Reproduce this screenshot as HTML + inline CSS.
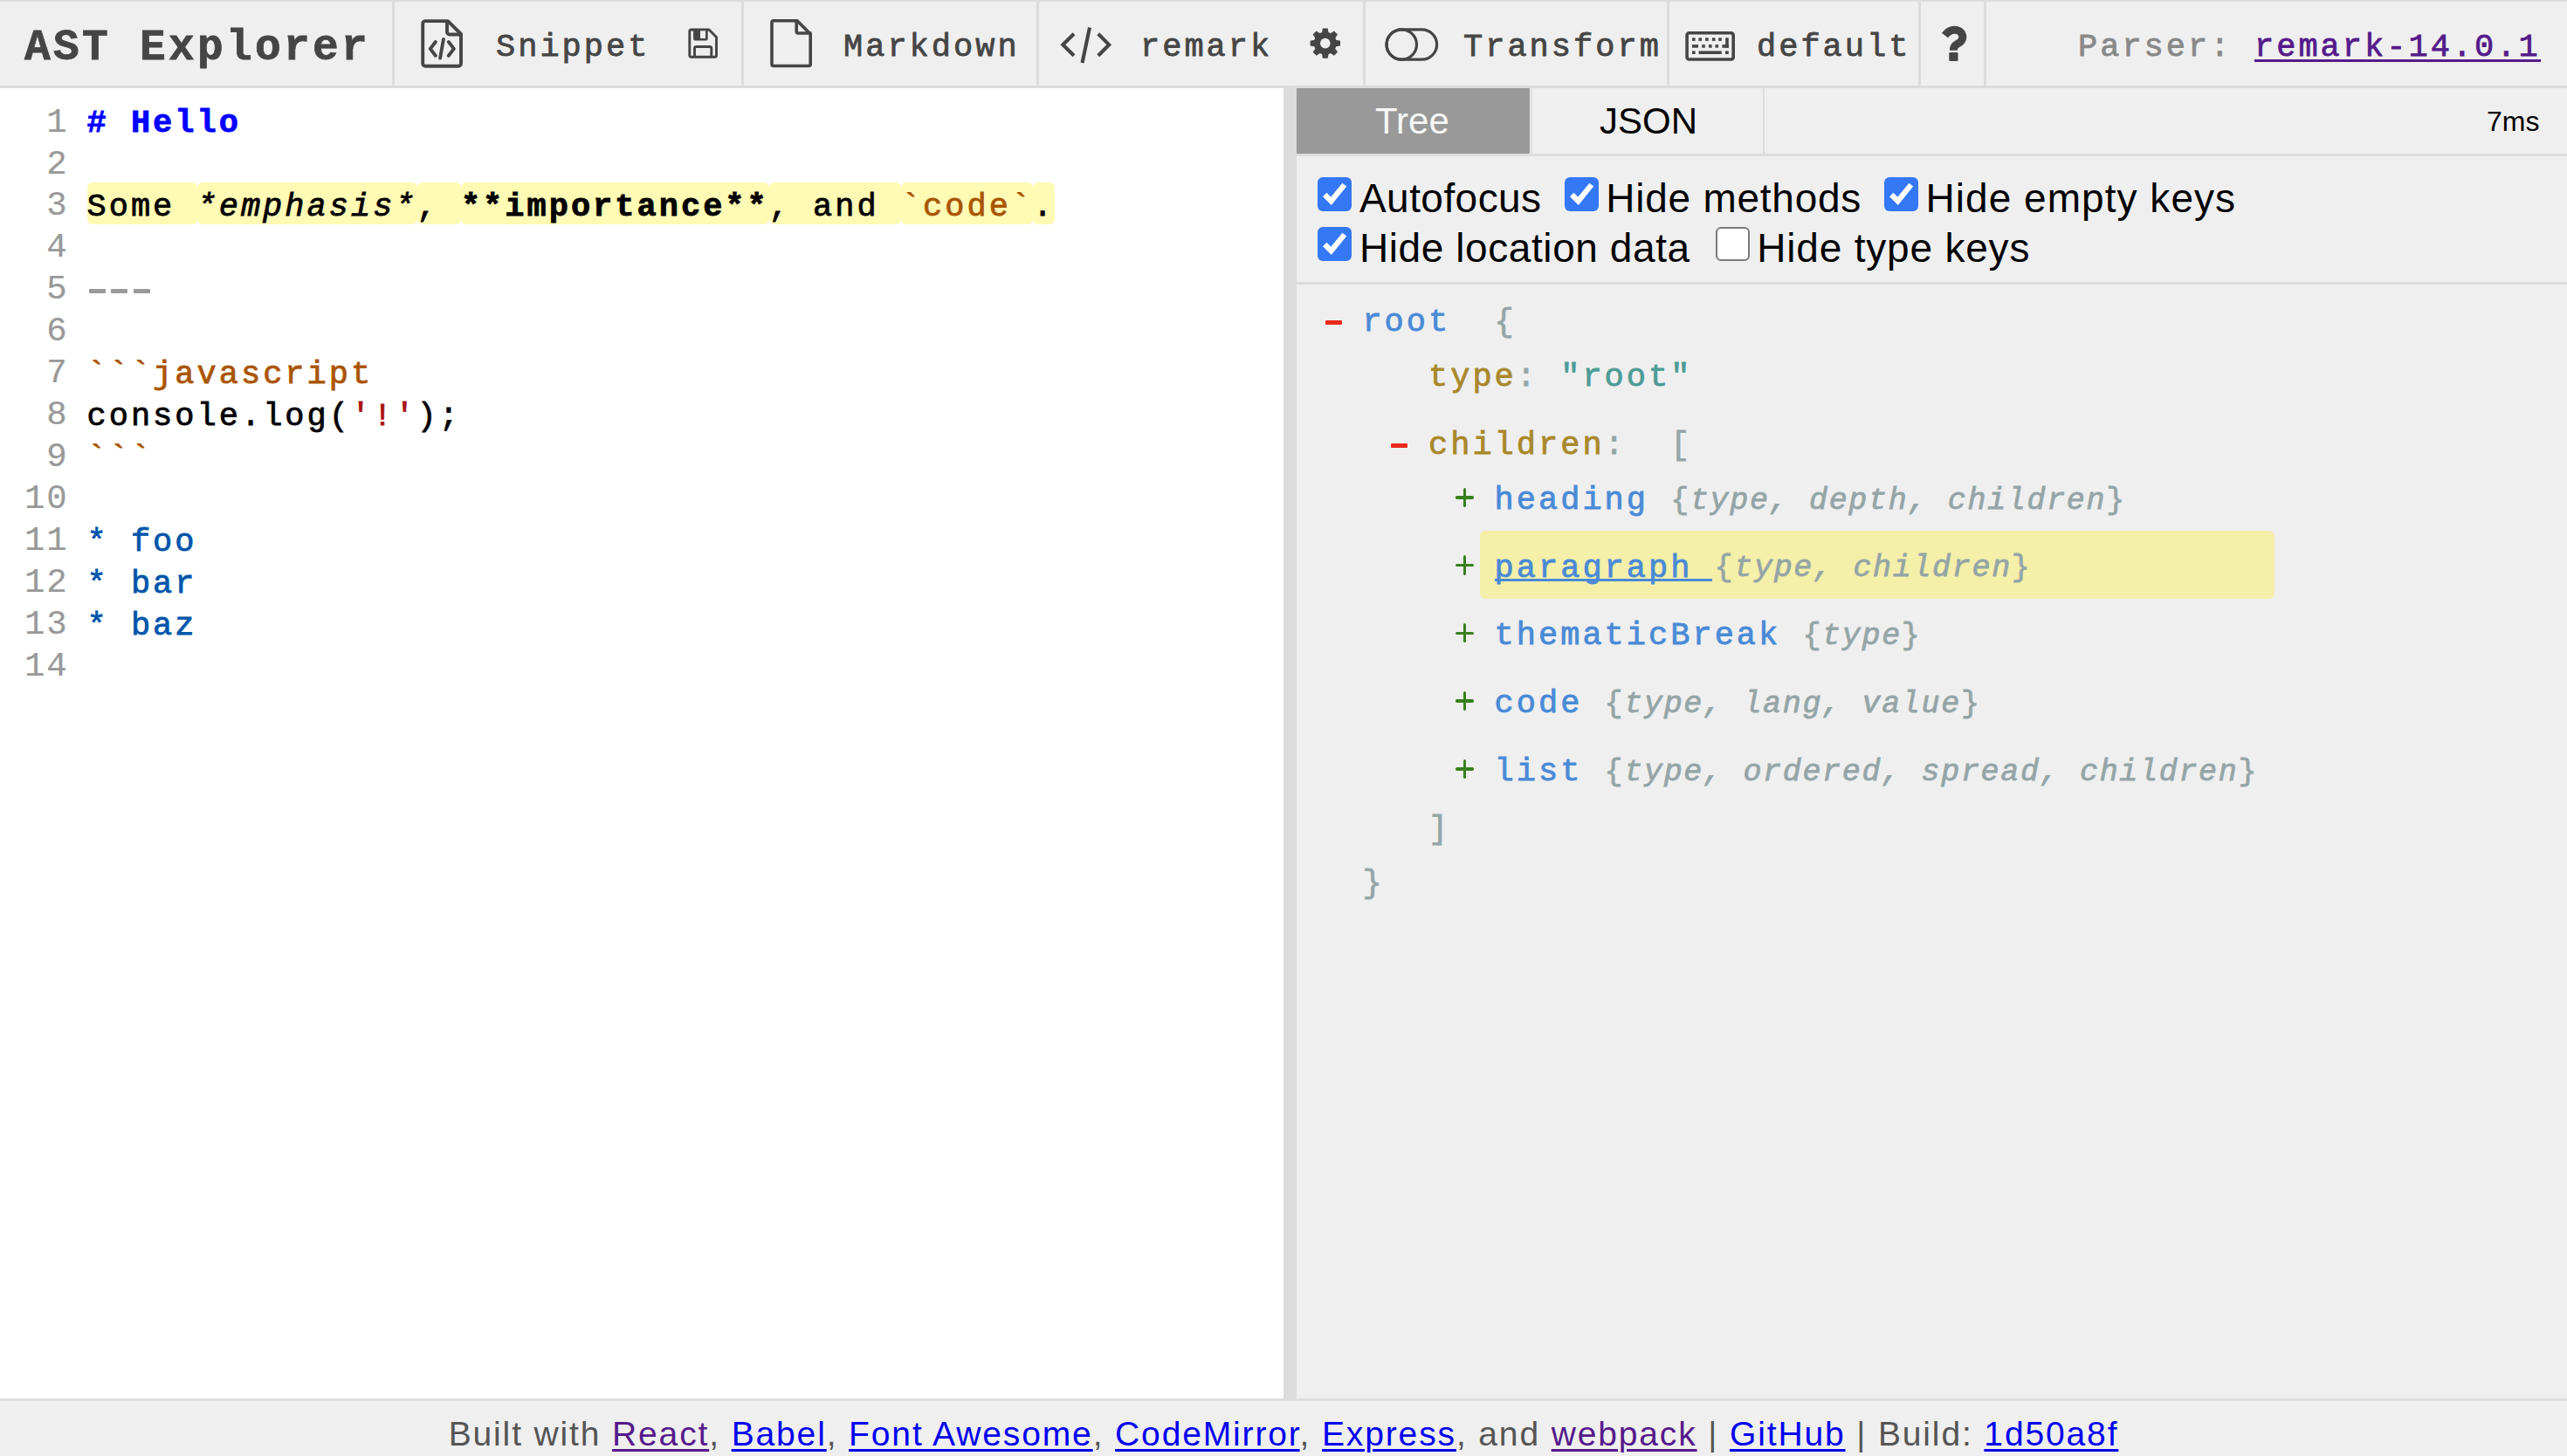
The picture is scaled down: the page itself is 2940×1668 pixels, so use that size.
<!DOCTYPE html>
<html><head><meta charset="utf-8"><title>AST Explorer</title>
<style>
html,body{margin:0;padding:0;}
body{width:2940px;height:1668px;overflow:hidden;position:relative;background:#fff;}
.a{position:absolute;white-space:pre;line-height:normal;}
.foot a{color:#551a8b;text-decoration:underline;text-decoration-thickness:3px;text-underline-offset:4px;}
.foot b{font-weight:normal;color:#0000ee;text-decoration:underline;text-decoration-thickness:3px;text-underline-offset:4px;}
</style></head><body>
<div class="a" style="left:0px;top:0px;width:2940px;height:100px;background:#efefef;"></div>
<div class="a" style="left:0px;top:0px;width:2940px;height:2px;background:#dddddd;"></div>
<div class="a" style="left:0px;top:98px;width:2940px;height:3px;background:#dcdcdc;"></div>
<div class="a" style="left:449px;top:2px;width:3px;height:96px;background:#dcdcdc;"></div>
<div class="a" style="left:849px;top:2px;width:3px;height:96px;background:#dcdcdc;"></div>
<div class="a" style="left:1187px;top:2px;width:3px;height:96px;background:#dcdcdc;"></div>
<div class="a" style="left:1561px;top:2px;width:3px;height:96px;background:#dcdcdc;"></div>
<div class="a" style="left:1909px;top:2px;width:3px;height:96px;background:#dcdcdc;"></div>
<div class="a" style="left:2197px;top:2px;width:3px;height:96px;background:#dcdcdc;"></div>
<div class="a" style="left:2272px;top:2px;width:3px;height:96px;background:#dcdcdc;"></div>
<div class="a" style="left:0px;top:101px;width:1470px;height:1501px;background:#ffffff;"></div>
<div class="a" style="left:1470px;top:101px;width:15px;height:1501px;background:#dcdcdc;"></div>
<div class="a" style="left:1485px;top:101px;width:1455px;height:1501px;background:#efefef;"></div>
<div class="a" style="left:1485px;top:101px;width:267px;height:75px;background:#999999;"></div>
<div class="a" style="left:1753px;top:101px;width:2px;height:75px;background:#dddddd;"></div>
<div class="a" style="left:2019px;top:101px;width:2px;height:75px;background:#dddddd;"></div>
<div class="a" style="left:1485px;top:176px;width:1455px;height:3px;background:#dddddd;"></div>
<div class="a" style="left:1485px;top:323px;width:1455px;height:3px;background:#dddddd;"></div>
<div class="a" style="left:0px;top:1602px;width:2940px;height:3px;background:#dddddd;"></div>
<div class="a" style="left:0px;top:1605px;width:2940px;height:63px;background:#efefef;"></div>
<div class="a" style="left:28.0px;top:26.8px;font-family:'Liberation Mono',monospace;font-size:49.5px;letter-spacing:3.30px;color:#454545;font-weight:bold;font-style:normal;-webkit-text-stroke:0.8px #454545;">AST Explorer</div>
<div class="a" style="left:568.0px;top:32.8px;font-family:'Liberation Mono',monospace;font-size:37px;letter-spacing:3.00px;color:#454545;font-weight:normal;font-style:normal;-webkit-text-stroke:0.8px #454545;">Snippet</div>
<div class="a" style="left:966.0px;top:32.8px;font-family:'Liberation Mono',monospace;font-size:37px;letter-spacing:3.00px;color:#454545;font-weight:normal;font-style:normal;-webkit-text-stroke:0.8px #454545;">Markdown</div>
<div class="a" style="left:1306.0px;top:32.8px;font-family:'Liberation Mono',monospace;font-size:37px;letter-spacing:3.00px;color:#454545;font-weight:normal;font-style:normal;-webkit-text-stroke:0.8px #454545;">remark</div>
<div class="a" style="left:1676.0px;top:32.8px;font-family:'Liberation Mono',monospace;font-size:37px;letter-spacing:3.00px;color:#454545;font-weight:normal;font-style:normal;-webkit-text-stroke:0.8px #454545;">Transform</div>
<div class="a" style="left:2012.0px;top:32.8px;font-family:'Liberation Mono',monospace;font-size:37px;letter-spacing:3.00px;color:#454545;font-weight:normal;font-style:normal;-webkit-text-stroke:0.8px #454545;">default</div>
<div class="a" style="left:2380.0px;top:33.2px;font-family:'Liberation Mono',monospace;font-size:37px;letter-spacing:3.00px;color:#888888;font-weight:normal;font-style:normal;-webkit-text-stroke:0.8px #888888;">Parser:</div>
<div class="a" style="left:2582.0px;top:33.2px;font-family:'Liberation Mono',monospace;font-size:37px;letter-spacing:3.00px;color:#551a8b;font-weight:normal;font-style:normal;-webkit-text-stroke:0.8px #551a8b;">remark-14.0.1</div>
<div class="a" style="left:2582px;top:68px;width:328px;height:3px;background:#551a8b;"></div>
<div class="a" style="left:53.3px;top:118.5px;font-family:'Liberation Mono',monospace;font-size:39px;letter-spacing:1.80px;color:#999999;font-weight:normal;font-style:normal;-webkit-text-stroke:0.2px #999999;">1</div>
<div class="a" style="left:53.3px;top:166.5px;font-family:'Liberation Mono',monospace;font-size:39px;letter-spacing:1.80px;color:#999999;font-weight:normal;font-style:normal;-webkit-text-stroke:0.2px #999999;">2</div>
<div class="a" style="left:53.3px;top:214.4px;font-family:'Liberation Mono',monospace;font-size:39px;letter-spacing:1.80px;color:#999999;font-weight:normal;font-style:normal;-webkit-text-stroke:0.2px #999999;">3</div>
<div class="a" style="left:53.3px;top:262.4px;font-family:'Liberation Mono',monospace;font-size:39px;letter-spacing:1.80px;color:#999999;font-weight:normal;font-style:normal;-webkit-text-stroke:0.2px #999999;">4</div>
<div class="a" style="left:53.3px;top:310.3px;font-family:'Liberation Mono',monospace;font-size:39px;letter-spacing:1.80px;color:#999999;font-weight:normal;font-style:normal;-webkit-text-stroke:0.2px #999999;">5</div>
<div class="a" style="left:53.3px;top:358.3px;font-family:'Liberation Mono',monospace;font-size:39px;letter-spacing:1.80px;color:#999999;font-weight:normal;font-style:normal;-webkit-text-stroke:0.2px #999999;">6</div>
<div class="a" style="left:53.3px;top:406.2px;font-family:'Liberation Mono',monospace;font-size:39px;letter-spacing:1.80px;color:#999999;font-weight:normal;font-style:normal;-webkit-text-stroke:0.2px #999999;">7</div>
<div class="a" style="left:53.3px;top:454.2px;font-family:'Liberation Mono',monospace;font-size:39px;letter-spacing:1.80px;color:#999999;font-weight:normal;font-style:normal;-webkit-text-stroke:0.2px #999999;">8</div>
<div class="a" style="left:53.3px;top:502.1px;font-family:'Liberation Mono',monospace;font-size:39px;letter-spacing:1.80px;color:#999999;font-weight:normal;font-style:normal;-webkit-text-stroke:0.2px #999999;">9</div>
<div class="a" style="left:28.1px;top:550.1px;font-family:'Liberation Mono',monospace;font-size:39px;letter-spacing:1.80px;color:#999999;font-weight:normal;font-style:normal;-webkit-text-stroke:0.2px #999999;">10</div>
<div class="a" style="left:28.1px;top:598.0px;font-family:'Liberation Mono',monospace;font-size:39px;letter-spacing:1.80px;color:#999999;font-weight:normal;font-style:normal;-webkit-text-stroke:0.2px #999999;">11</div>
<div class="a" style="left:28.1px;top:646.0px;font-family:'Liberation Mono',monospace;font-size:39px;letter-spacing:1.80px;color:#999999;font-weight:normal;font-style:normal;-webkit-text-stroke:0.2px #999999;">12</div>
<div class="a" style="left:28.1px;top:693.9px;font-family:'Liberation Mono',monospace;font-size:39px;letter-spacing:1.80px;color:#999999;font-weight:normal;font-style:normal;-webkit-text-stroke:0.2px #999999;">13</div>
<div class="a" style="left:28.1px;top:741.9px;font-family:'Liberation Mono',monospace;font-size:39px;letter-spacing:1.80px;color:#999999;font-weight:normal;font-style:normal;-webkit-text-stroke:0.2px #999999;">14</div>
<div class="a" style="left:100px;top:209px;width:126px;height:48px;background:rgba(255,240,6,0.3);border-radius:6px;"></div>
<div class="a" style="left:226px;top:209px;width:252px;height:48px;background:rgba(255,240,6,0.3);border-radius:6px;"></div>
<div class="a" style="left:478px;top:209px;width:50px;height:48px;background:rgba(255,240,6,0.3);border-radius:6px;"></div>
<div class="a" style="left:528px;top:209px;width:353px;height:48px;background:rgba(255,240,6,0.3);border-radius:6px;"></div>
<div class="a" style="left:881px;top:209px;width:151px;height:48px;background:rgba(255,240,6,0.3);border-radius:6px;"></div>
<div class="a" style="left:1032px;top:209px;width:151px;height:48px;background:rgba(255,240,6,0.3);border-radius:6px;"></div>
<div class="a" style="left:1183px;top:209px;width:25px;height:48px;background:rgba(255,240,6,0.3);border-radius:6px;"></div>
<div class="a" style="left:99.5px;top:120.2px;font-family:'Liberation Mono',monospace;font-size:37px;letter-spacing:3.00px;color:#0000ff;font-weight:bold;font-style:normal;-webkit-text-stroke:0.8px #0000ff;"># Hello</div>
<div class="a" style="left:99.5px;top:216.1px;font-family:'Liberation Mono',monospace;font-size:37px;letter-spacing:3.00px;color:#000;font-weight:normal;font-style:normal;-webkit-text-stroke:0.8px #000;">Some </div>
<div class="a" style="left:225.5px;top:216.1px;font-family:'Liberation Mono',monospace;font-size:37px;letter-spacing:3.00px;color:#000;font-weight:normal;font-style:italic;-webkit-text-stroke:0.8px #000;">*emphasis*</div>
<div class="a" style="left:477.5px;top:216.1px;font-family:'Liberation Mono',monospace;font-size:37px;letter-spacing:3.00px;color:#000;font-weight:normal;font-style:normal;-webkit-text-stroke:0.8px #000;">, </div>
<div class="a" style="left:527.9px;top:216.1px;font-family:'Liberation Mono',monospace;font-size:37px;letter-spacing:3.00px;color:#000;font-weight:bold;font-style:normal;-webkit-text-stroke:0.8px #000;">**importance**</div>
<div class="a" style="left:880.7px;top:216.1px;font-family:'Liberation Mono',monospace;font-size:37px;letter-spacing:3.00px;color:#000;font-weight:normal;font-style:normal;-webkit-text-stroke:0.8px #000;">, and </div>
<div class="a" style="left:1031.9px;top:216.1px;font-family:'Liberation Mono',monospace;font-size:37px;letter-spacing:3.00px;color:#aa5500;font-weight:normal;font-style:normal;-webkit-text-stroke:0.8px #aa5500;">`code`</div>
<div class="a" style="left:1183.1px;top:216.1px;font-family:'Liberation Mono',monospace;font-size:37px;letter-spacing:3.00px;color:#000;font-weight:normal;font-style:normal;-webkit-text-stroke:0.8px #000;">.</div>
<div class="a" style="left:102.1px;top:331px;width:19.2px;height:4.5px;background:#999;border-radius:1px"></div>
<div class="a" style="left:127.3px;top:331px;width:19.2px;height:4.5px;background:#999;border-radius:1px"></div>
<div class="a" style="left:152.5px;top:331px;width:19.2px;height:4.5px;background:#999;border-radius:1px"></div>
<div class="a" style="left:99.5px;top:407.9px;font-family:'Liberation Mono',monospace;font-size:37px;letter-spacing:3.00px;color:#aa5500;font-weight:normal;font-style:normal;-webkit-text-stroke:0.8px #aa5500;">```javascript</div>
<div class="a" style="left:99.5px;top:455.8px;font-family:'Liberation Mono',monospace;font-size:37px;letter-spacing:3.00px;color:#000;font-weight:normal;font-style:normal;-webkit-text-stroke:0.8px #000;">console.log(</div>
<div class="a" style="left:401.9px;top:455.8px;font-family:'Liberation Mono',monospace;font-size:37px;letter-spacing:3.00px;color:#aa1111;font-weight:normal;font-style:normal;-webkit-text-stroke:0.8px #aa1111;">'!'</div>
<div class="a" style="left:477.5px;top:455.8px;font-family:'Liberation Mono',monospace;font-size:37px;letter-spacing:3.00px;color:#000;font-weight:normal;font-style:normal;-webkit-text-stroke:0.8px #000;">);</div>
<div class="a" style="left:99.5px;top:503.8px;font-family:'Liberation Mono',monospace;font-size:37px;letter-spacing:3.00px;color:#aa5500;font-weight:normal;font-style:normal;-webkit-text-stroke:0.8px #aa5500;">```</div>
<div class="a" style="left:99.5px;top:599.7px;font-family:'Liberation Mono',monospace;font-size:37px;letter-spacing:3.00px;color:#0055aa;font-weight:normal;font-style:normal;-webkit-text-stroke:0.8px #0055aa;">* foo</div>
<div class="a" style="left:99.5px;top:647.6px;font-family:'Liberation Mono',monospace;font-size:37px;letter-spacing:3.00px;color:#0055aa;font-weight:normal;font-style:normal;-webkit-text-stroke:0.8px #0055aa;">* bar</div>
<div class="a" style="left:99.5px;top:695.6px;font-family:'Liberation Mono',monospace;font-size:37px;letter-spacing:3.00px;color:#0055aa;font-weight:normal;font-style:normal;-webkit-text-stroke:0.8px #0055aa;">* baz</div>
<div class="a" style="left:1575.0px;top:114.6px;font-family:'Liberation Sans',sans-serif;font-size:42px;letter-spacing:0px;color:#f7f7f7;">Tree</div>
<div class="a" style="left:1832.0px;top:114.6px;font-family:'Liberation Sans',sans-serif;font-size:42px;letter-spacing:0px;color:#000;">JSON</div>
<div class="a" style="left:2848.0px;top:120.5px;font-family:'Liberation Sans',sans-serif;font-size:32px;letter-spacing:0px;color:#000;">7ms</div>
<div class="a" style="left:1509px;top:203px;width:39px;height:39px;border-radius:6px;background:#3478f6"></div>
<svg class="a" style="left:1509px;top:203px" width="39" height="39" viewBox="0 0 39 39"><path d="M8.2 20 L15.6 27.3 L30.8 8.6" fill="none" stroke="#fff" stroke-width="6.2" stroke-linecap="butt" stroke-linejoin="miter"/></svg>
<div class="a" style="left:1557.0px;top:199.8px;font-family:'Liberation Sans',sans-serif;font-size:46px;letter-spacing:0.44px;color:#000;">Autofocus</div>
<div class="a" style="left:1792px;top:203px;width:39px;height:39px;border-radius:6px;background:#3478f6"></div>
<svg class="a" style="left:1792px;top:203px" width="39" height="39" viewBox="0 0 39 39"><path d="M8.2 20 L15.6 27.3 L30.8 8.6" fill="none" stroke="#fff" stroke-width="6.2" stroke-linecap="butt" stroke-linejoin="miter"/></svg>
<div class="a" style="left:1839.3px;top:199.8px;font-family:'Liberation Sans',sans-serif;font-size:46px;letter-spacing:0.75px;color:#000;">Hide methods</div>
<div class="a" style="left:2158px;top:203px;width:39px;height:39px;border-radius:6px;background:#3478f6"></div>
<svg class="a" style="left:2158px;top:203px" width="39" height="39" viewBox="0 0 39 39"><path d="M8.2 20 L15.6 27.3 L30.8 8.6" fill="none" stroke="#fff" stroke-width="6.2" stroke-linecap="butt" stroke-linejoin="miter"/></svg>
<div class="a" style="left:2205.5px;top:199.8px;font-family:'Liberation Sans',sans-serif;font-size:46px;letter-spacing:1.04px;color:#000;">Hide empty keys</div>
<div class="a" style="left:1509px;top:260px;width:39px;height:39px;border-radius:6px;background:#3478f6"></div>
<svg class="a" style="left:1509px;top:260px" width="39" height="39" viewBox="0 0 39 39"><path d="M8.2 20 L15.6 27.3 L30.8 8.6" fill="none" stroke="#fff" stroke-width="6.2" stroke-linecap="butt" stroke-linejoin="miter"/></svg>
<div class="a" style="left:1557.0px;top:256.8px;font-family:'Liberation Sans',sans-serif;font-size:46px;letter-spacing:0.58px;color:#000;">Hide location data</div>
<div class="a" style="left:1965px;top:260px;width:35px;height:35px;border-radius:6px;background:#fff;border:2px solid #7a7a7a"></div>
<div class="a" style="left:2012.3px;top:256.8px;font-family:'Liberation Sans',sans-serif;font-size:46px;letter-spacing:0.8px;color:#000;">Hide type keys</div>
<div class="a" style="left:1695px;top:608px;width:910px;height:78px;background:rgba(255,240,6,0.3);border-radius:6px;"></div>
<div class="a" style="left:1518px;top:367px;width:19.2px;height:4.5px;background:#e8291c;border-radius:1px"></div>
<div class="a" style="left:1560.4px;top:347.5px;font-family:'Liberation Mono',monospace;font-size:37px;letter-spacing:3.00px;color:#4a8ad6;font-weight:normal;font-style:normal;-webkit-text-stroke:0.8px #4a8ad6;">root</div>
<div class="a" style="left:1711.6px;top:347.5px;font-family:'Liberation Mono',monospace;font-size:37px;letter-spacing:3.00px;color:#95a5a6;font-weight:normal;font-style:normal;-webkit-text-stroke:0.8px #95a5a6;">{</div>
<div class="a" style="left:1636.0px;top:410.8px;font-family:'Liberation Mono',monospace;font-size:37px;letter-spacing:3.00px;color:#a9882b;font-weight:normal;font-style:normal;-webkit-text-stroke:0.8px #a9882b;">type</div>
<div class="a" style="left:1736.8px;top:410.8px;font-family:'Liberation Mono',monospace;font-size:37px;letter-spacing:3.00px;color:#95a5a6;font-weight:normal;font-style:normal;-webkit-text-stroke:0.8px #95a5a6;">:</div>
<div class="a" style="left:1787.2px;top:410.8px;font-family:'Liberation Mono',monospace;font-size:37px;letter-spacing:3.00px;color:#4e9c96;font-weight:normal;font-style:normal;-webkit-text-stroke:0.8px #4e9c96;">"root"</div>
<div class="a" style="left:1593px;top:508.2px;width:19.2px;height:4.5px;background:#e8291c;border-radius:1px"></div>
<div class="a" style="left:1636.0px;top:488.7px;font-family:'Liberation Mono',monospace;font-size:37px;letter-spacing:3.00px;color:#a9882b;font-weight:normal;font-style:normal;-webkit-text-stroke:0.8px #a9882b;">children</div>
<div class="a" style="left:1837.6px;top:488.7px;font-family:'Liberation Mono',monospace;font-size:37px;letter-spacing:3.00px;color:#95a5a6;font-weight:normal;font-style:normal;-webkit-text-stroke:0.8px #95a5a6;">:</div>
<div class="a" style="left:1913.2px;top:488.7px;font-family:'Liberation Mono',monospace;font-size:37px;letter-spacing:3.00px;color:#95a5a6;font-weight:normal;font-style:normal;-webkit-text-stroke:0.8px #95a5a6;">[</div>
<div class="a" style="left:1667px;top:568.0px;width:21.4px;height:3.7px;background:#37801e;border-radius:1.8px"></div>
<div class="a" style="left:1675.8px;top:558.6px;width:3.6px;height:22.3px;background:#37801e;border-radius:1.8px"></div>
<div class="a" style="left:1711.6px;top:551.8px;font-family:'Liberation Mono',monospace;font-size:37px;letter-spacing:3.00px;color:#4a8ad6;font-weight:normal;font-style:normal;-webkit-text-stroke:0.8px #4a8ad6;">heading</div>
<div class="a" style="left:1913.2px;top:553.5px;font-family:'Liberation Mono',monospace;font-size:35px;letter-spacing:1.68px;color:#95a5a6;font-weight:normal;font-style:normal;-webkit-text-stroke:0.8px #95a5a6;">{<i>type, depth, children</i>}</div>
<div class="a" style="left:1667px;top:645.8px;width:21.4px;height:3.7px;background:#37801e;border-radius:1.8px"></div>
<div class="a" style="left:1675.8px;top:636.4px;width:3.6px;height:22.3px;background:#37801e;border-radius:1.8px"></div>
<div class="a" style="left:1711.6px;top:629.6px;font-family:'Liberation Mono',monospace;font-size:37px;letter-spacing:3.00px;color:#4a8ad6;font-weight:normal;font-style:normal;-webkit-text-stroke:0.8px #4a8ad6;">paragraph</div>
<div class="a" style="left:1712px;top:663px;width:249px;height:3px;background:#4a8ad6;"></div>
<div class="a" style="left:1963.6px;top:631.3px;font-family:'Liberation Mono',monospace;font-size:35px;letter-spacing:1.68px;color:#95a5a6;font-weight:normal;font-style:normal;-webkit-text-stroke:0.8px #95a5a6;">{<i>type, children</i>}</div>
<div class="a" style="left:1667px;top:723.6px;width:21.4px;height:3.7px;background:#37801e;border-radius:1.8px"></div>
<div class="a" style="left:1675.8px;top:714.2px;width:3.6px;height:22.3px;background:#37801e;border-radius:1.8px"></div>
<div class="a" style="left:1711.6px;top:707.4px;font-family:'Liberation Mono',monospace;font-size:37px;letter-spacing:3.00px;color:#4a8ad6;font-weight:normal;font-style:normal;-webkit-text-stroke:0.8px #4a8ad6;">thematicBreak</div>
<div class="a" style="left:2064.4px;top:709.1px;font-family:'Liberation Mono',monospace;font-size:35px;letter-spacing:1.68px;color:#95a5a6;font-weight:normal;font-style:normal;-webkit-text-stroke:0.8px #95a5a6;">{<i>type</i>}</div>
<div class="a" style="left:1667px;top:801.4px;width:21.4px;height:3.7px;background:#37801e;border-radius:1.8px"></div>
<div class="a" style="left:1675.8px;top:792.0px;width:3.6px;height:22.3px;background:#37801e;border-radius:1.8px"></div>
<div class="a" style="left:1711.6px;top:785.2px;font-family:'Liberation Mono',monospace;font-size:37px;letter-spacing:3.00px;color:#4a8ad6;font-weight:normal;font-style:normal;-webkit-text-stroke:0.8px #4a8ad6;">code</div>
<div class="a" style="left:1837.6px;top:786.9px;font-family:'Liberation Mono',monospace;font-size:35px;letter-spacing:1.68px;color:#95a5a6;font-weight:normal;font-style:normal;-webkit-text-stroke:0.8px #95a5a6;">{<i>type, lang, value</i>}</div>
<div class="a" style="left:1667px;top:879.2px;width:21.4px;height:3.7px;background:#37801e;border-radius:1.8px"></div>
<div class="a" style="left:1675.8px;top:869.8px;width:3.6px;height:22.3px;background:#37801e;border-radius:1.8px"></div>
<div class="a" style="left:1711.6px;top:863.0px;font-family:'Liberation Mono',monospace;font-size:37px;letter-spacing:3.00px;color:#4a8ad6;font-weight:normal;font-style:normal;-webkit-text-stroke:0.8px #4a8ad6;">list</div>
<div class="a" style="left:1837.6px;top:864.7px;font-family:'Liberation Mono',monospace;font-size:35px;letter-spacing:1.68px;color:#95a5a6;font-weight:normal;font-style:normal;-webkit-text-stroke:0.8px #95a5a6;">{<i>type, ordered, spread, children</i>}</div>
<div class="a" style="left:1636.0px;top:929.2px;font-family:'Liberation Mono',monospace;font-size:37px;letter-spacing:3.00px;color:#95a5a6;font-weight:normal;font-style:normal;-webkit-text-stroke:0.8px #95a5a6;">]</div>
<div class="a" style="left:1560.4px;top:991.2px;font-family:'Liberation Mono',monospace;font-size:37px;letter-spacing:3.00px;color:#95a5a6;font-weight:normal;font-style:normal;-webkit-text-stroke:0.8px #95a5a6;">}</div>
<div class="a foot" style="left:0;width:2940px;text-align:center;top:1621.4px;font-family:'Liberation Sans',sans-serif;font-size:39px;letter-spacing:1.86px;color:#555"><span style="color:#555">Built with </span><a>React</a>, <b>Babel</b>, <b>Font Awesome</b>, <b>CodeMirror</b>, <b>Express</b>, and <a>webpack</a> | <b>GitHub</b> | Build: <b>1d50a8f</b></div>
<svg class="a" style="left:0;top:0" width="2940" height="100" viewBox="0 0 2940 100" fill="none" stroke="#454545">
<!-- file-code -->
<path d="M487.2 24.1 H513 L528 39 V72.8 A3 3 0 0 1 525 75.8 H487.2 A3 3 0 0 1 484.2 72.8 V27.1 A3 3 0 0 1 487.2 24.1 Z" stroke-width="3.9" stroke-linejoin="round"/>
<path d="M512 24.1 V36.5 A3 3 0 0 0 515 39.5 H528" stroke-width="3.9"/>
<path d="M498.8 48 L492.8 55.9 L498.8 63.8 M513.8 48 L519.8 55.9 L513.8 63.8" stroke-width="3.9" stroke-linecap="round" stroke-linejoin="round"/>
<path d="M507.9 45 L504.1 66.5" stroke-width="3.9" stroke-linecap="round"/>
<!-- floppy -->
<path d="M791.5 34 H812 L820.5 42.5 V63.5 A1.7 1.7 0 0 1 818.8 65.2 H791.5 A1.7 1.7 0 0 1 789.8 63.5 V35.7 A1.7 1.7 0 0 1 791.5 34 Z" stroke-width="2.9"/>
<path d="M794.1 33 V44.5 A2 2 0 0 0 796.1 46.5 H808.7 A2 2 0 0 0 810.7 44.5 V33 Z" fill="#454545" stroke="none"/>
<rect x="802" y="35.3" width="6" height="8.6" fill="#efefef" stroke="none"/>
<path d="M795.5 65.2 V55.5 A2 2 0 0 1 797.5 53.5 H812.8 A2 2 0 0 1 814.8 55.5 V65.2" stroke-width="2.9"/>
<!-- file -->
<path d="M886 23.8 H913 L928.2 39 V73.5 A2 2 0 0 1 926.2 75.5 H886 A2 2 0 0 1 884 73.5 V25.8 A2 2 0 0 1 886 23.8 Z" stroke-width="3.6"/>
<path d="M912.2 22.5 V36 A2 2 0 0 0 914.2 38 H929.5" stroke-width="3.6"/>
<!-- code -->
<path d="M1230 38.8 L1217.3 51.3 L1230 63.8 M1257.8 38.8 L1270.2 51.3 L1257.8 63.8" stroke-width="4.1" stroke-linecap="butt" stroke-linejoin="miter"/>
<path d="M1248 31.5 L1239.5 72" stroke-width="4.1"/>
<!-- toggle -->
<rect x="1588" y="33.8" width="57.6" height="34.4" rx="17.2" stroke-width="3.2"/>
<circle cx="1605.3" cy="51" r="17.2" stroke-width="3.2"/>
<!-- keyboard -->
<rect x="1932.1" y="37.8" width="53.1" height="30.2" rx="2.5" stroke-width="3.6"/>
<g fill="#454545" stroke="none">
<rect x="1938" y="43.3" width="3.6" height="3.6"/><rect x="1945.4" y="43.3" width="3.6" height="3.6"/><rect x="1953.1" y="43.3" width="3.6" height="3.6"/><rect x="1960.9" y="43.3" width="3.6" height="3.6"/><rect x="1968.2" y="43.3" width="3.6" height="3.6"/>
<rect x="1976.2" y="43.3" width="3.6" height="11.4"/><rect x="1972.4" y="51.1" width="7.4" height="3.6"/>
<rect x="1938" y="51.1" width="7" height="3.6"/><rect x="1949.2" y="51.1" width="3.6" height="3.6"/><rect x="1957" y="51.1" width="3.6" height="3.6"/><rect x="1964.5" y="51.1" width="3.6" height="3.6"/>
<rect x="1938" y="58.4" width="3.6" height="3.6"/><rect x="1945.6" y="58.4" width="26.2" height="3.6"/><rect x="1976" y="58.4" width="3.8" height="3.6"/>
</g>
<!-- gear -->
<g transform="translate(1517.8 49.6)" fill="#454545" stroke="none">
<circle r="13"/>
<path d="M-4 -11 L-2.9 -17.2 L2.9 -17.2 L4 -11 Z" transform="rotate(0)"/>
<path d="M-4 -11 L-2.9 -17.2 L2.9 -17.2 L4 -11 Z" transform="rotate(45)"/>
<path d="M-4 -11 L-2.9 -17.2 L2.9 -17.2 L4 -11 Z" transform="rotate(90)"/>
<path d="M-4 -11 L-2.9 -17.2 L2.9 -17.2 L4 -11 Z" transform="rotate(135)"/>
<path d="M-4 -11 L-2.9 -17.2 L2.9 -17.2 L4 -11 Z" transform="rotate(180)"/>
<path d="M-4 -11 L-2.9 -17.2 L2.9 -17.2 L4 -11 Z" transform="rotate(225)"/>
<path d="M-4 -11 L-2.9 -17.2 L2.9 -17.2 L4 -11 Z" transform="rotate(270)"/>
<path d="M-4 -11 L-2.9 -17.2 L2.9 -17.2 L4 -11 Z" transform="rotate(315)"/>
<circle r="5.8" fill="#efefef"/>
</g>
<!-- question -->
<path d="M2227.5 40.5 C2230.5 36.5 2234 34.2 2238.5 34.2 C2244 34.2 2247.8 37.8 2247.8 42.5 C2247.8 46.8 2245 48.8 2241.5 50.5 C2238.5 52 2237.3 54.3 2237.3 57.8" stroke-width="9" stroke-linecap="butt"/>
<rect x="2232.3" y="60.1" width="10.2" height="9.9" rx="1.2" fill="#454545" stroke="none"/>
</svg>
</body></html>
